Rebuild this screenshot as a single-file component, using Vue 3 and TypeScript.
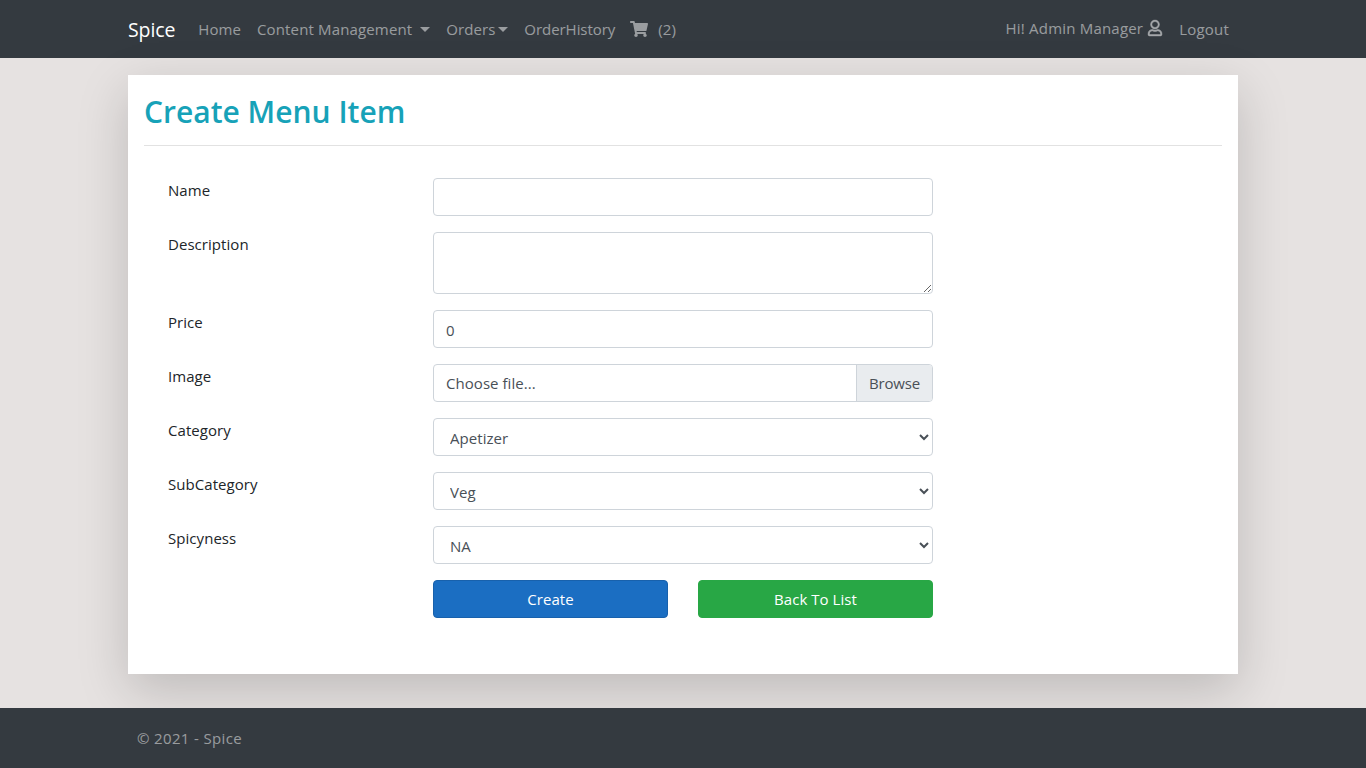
<template>
  <div class="page">
    <header class="navbar">
      <div class="wrap nav-inner">
        <a class="brand" href="#">Spice</a>
        <nav class="links">
          <a href="#">Home</a>
          <a href="#" class="content-link">Content Management <i class="caret"></i></a>
          <a href="#">Orders<i class="caret near"></i></a>
          <a href="#" class="history">OrderHistory</a>
          <a href="#" class="cart">
            <svg class="cart-icon" viewBox="0 0 576 512" fill="currentColor">
              <path d="M528.12 301.319l47.273-208C578.806 78.301 567.391 64 551.99 64H159.208l-9.166-44.81C147.758 8.021 137.93 0 126.529 0H24C10.745 0 0 10.745 0 24v16c0 13.255 10.745 24 24 24h69.883l70.248 343.435C147.325 417.1 136 435.222 136 456c0 30.928 25.072 56 56 56s56-25.072 56-56c0-15.674-6.447-29.835-16.824-40h209.647C430.447 426.165 424 440.326 424 456c0 30.928 25.072 56 56 56s56-25.072 56-56c0-22.172-12.888-41.332-31.579-50.405l5.517-24.276c3.413-15.018-8.002-29.319-23.403-29.319H218.117l-6.545-32h293.145c11.206 0 20.92-7.754 23.403-18.681z" />
            </svg>
            <span>({{ cartCount }})</span>
          </a>
        </nav>
        <div class="user">
          <a href="#" class="hello">
            Hi! Admin Manager
            <svg class="user-icon" viewBox="0 0 448 512" fill="currentColor" stroke="currentColor" stroke-width="14">
              <path d="M313.6 304c-28.7 0-42.5 16-89.6 16-47.1 0-60.8-16-89.6-16C60.2 304 0 364.2 0 438.4V464c0 26.5 21.5 48 48 48h352c26.5 0 48-21.5 48-48v-25.6c0-74.2-60.2-134.4-134.4-134.4zM400 464H48v-25.6c0-47.6 38.8-86.4 86.4-86.4 14.6 0 38.3 16 89.6 16 51.7 0 74.9-16 89.6-16 47.6 0 86.4 38.8 86.4 86.4V464zM224 288c79.5 0 144-64.5 144-144S303.5 0 224 0 80 64.5 80 144s64.5 144 144 144zm0-240c52.9 0 96 43.1 96 96s-43.1 96-96 96-96-43.1-96-96 43.1-96 96-96z" />
            </svg>
          </a>
          <a href="#" class="logout">Logout</a>
        </div>
      </div>
    </header>

    <main class="wrap main">
      <section class="card">
        <h2>Create Menu Item</h2>
        <hr />
        <form class="form" @submit.prevent>
          <div class="row">
            <label>Name</label>
            <input type="text" class="control" />
          </div>
          <div class="row">
            <label>Description</label>
            <textarea class="control area"></textarea>
          </div>
          <div class="row">
            <label>Price</label>
            <input type="text" class="control" value="0" />
          </div>
          <div class="row">
            <label>Image</label>
            <div class="file">
              <span class="file-name">Choose file...</span>
              <span class="browse">Browse</span>
            </div>
          </div>
          <div v-for="s in selects" :key="s.label" class="row">
            <label>{{ s.label }}</label>
            <select class="control">
              <option>{{ s.value }}</option>
            </select>
          </div>
          <div class="row">
            <span></span>
            <div class="actions">
              <button class="btn create" type="submit">Create</button>
              <button class="btn back" type="button">Back To List</button>
            </div>
          </div>
        </form>
      </section>
    </main>

    <footer class="footer">
      <div class="wrap copy">© 2021 - Spice</div>
    </footer>
  </div>
</template>

<script setup lang="ts">
const cartCount = 2;

const selects = [
  { label: "Category", value: "Apetizer" },
  { label: "SubCategory", value: "Veg" },
  { label: "Spicyness", value: "NA" },
];
</script>

<style>
body {
  background: #e6e2e1;
}
</style>

<style scoped>
.page {
  font-family: "Open Sans", "Noto Sans", sans-serif;
  font-size: 15px;
  letter-spacing: 0.05px;
  color: #212529;
  min-height: 768px;
  overflow: hidden;
}

.wrap {
  width: 1110px;
  margin: 0 auto;
}

a {
  color: rgba(255, 255, 255, 0.5);
  text-decoration: none;
}

.navbar {
  background: #343a40;
  height: 58px;
}

.nav-inner {
  display: flex;
  align-items: center;
  height: 100%;
}

.brand {
  color: #fff;
  font-size: 19.5px;
  letter-spacing: -0.1px;
  margin-right: 23px;
}

.links {
  display: flex;
  align-items: center;
  gap: 16px;
}

.content-link {
  letter-spacing: 0.15px;
}

.history {
  letter-spacing: -0.05px;
}

.caret {
  display: inline-block;
  margin-left: 4px;
  vertical-align: 3px;
  border-top: 5px solid;
  border-left: 5px solid transparent;
  border-right: 5px solid transparent;
}

.caret.near {
  margin-left: 3px;
}

.cart {
  display: flex;
  align-items: center;
  gap: 10px;
  margin-left: -1px;
}

.cart-icon {
  width: 18px;
  height: 16px;
}

.user {
  margin-left: auto;
  margin-right: 9px;
  display: flex;
  align-items: center;
  gap: 17px;
}

.hello {
  display: flex;
  align-items: center;
  gap: 5px;
  margin-top: -2px;
  letter-spacing: 0.2px;
}

.user-icon {
  width: 14px;
  height: 16px;
  overflow: visible;
}

.logout {
  letter-spacing: 0.2px;
}

.main {
  padding: 17px 0 34px;
}

.card {
  background: #fff;
  height: 599px;
  padding: 16px;
  box-sizing: border-box;
  box-shadow: 0 16px 48px rgba(0, 0, 0, 0.175);
}

h2 {
  margin: 0;
  color: #17a2b8;
  font-size: 30px;
  font-weight: 600;
  line-height: 42px;
  letter-spacing: 0;
}

hr {
  margin: 12px 0 0;
  border: 0;
  border-top: 1px solid #e2e2e2;
}

.form {
  display: flex;
  flex-direction: column;
  gap: 16px;
  padding: 32px 0 0 24px;
}

.row {
  display: grid;
  grid-template-columns: 265px 500px;
}

.row label {
  padding-top: 1px;
  line-height: 22px;
}

.control {
  font: inherit;
  letter-spacing: inherit;
  color: #495057;
  background: #fff;
  box-sizing: border-box;
  width: 500px;
  height: 38px;
  padding: 7px 12px 5px;
  border: 1px solid #ced4da;
  border-radius: 4px;
}

.area {
  height: 62px;
  display: block;
}

.file {
  display: flex;
  height: 38px;
  box-sizing: border-box;
  border: 1px solid #ced4da;
  border-radius: 4px;
  color: #495057;
  line-height: 36px;
  overflow: hidden;
}

.file-name {
  flex: 1;
  padding-left: 12px;
}

.browse {
  background: #e9ecef;
  border-left: 1px solid #ced4da;
  box-sizing: border-box;
  width: 76px;
  text-align: center;
  letter-spacing: -0.2px;
}

.actions {
  display: flex;
  gap: 30px;
}

.btn {
  flex: 1;
  height: 38px;
  font: inherit;
  letter-spacing: inherit;
  color: #fff;
  border: 1px solid;
  border-radius: 4px;
}

.create {
  background: #1b6ec2;
  border-color: #1861ac;
}

.back {
  background: #28a745;
  border-color: #28a745;
}

.footer {
  background: #343a40;
  height: 60px;
}

.copy {
  padding-left: 9px;
  box-sizing: border-box;
  line-height: 60px;
  letter-spacing: 0.35px;
  color: rgba(255, 255, 255, 0.5);
}
</style>
